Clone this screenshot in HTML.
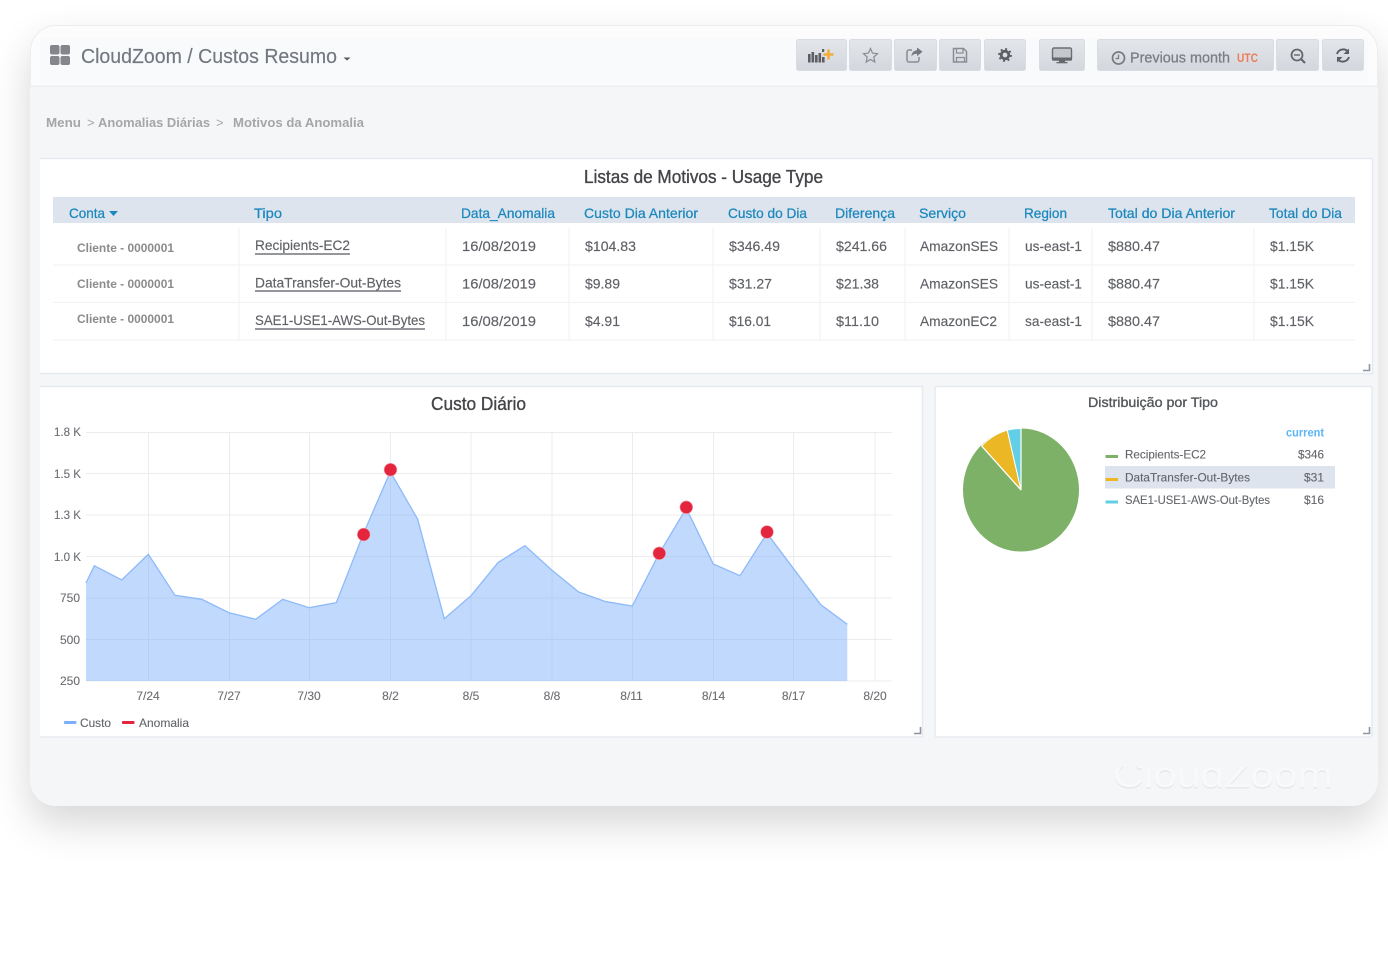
<!DOCTYPE html>
<html lang="pt"><head><meta charset="utf-8"><title>CloudZoom / Custos Resumo</title>
<style>
html,body{margin:0;padding:0;background:#fff;width:1388px;height:959px;overflow:hidden}
#card{position:absolute;left:30px;top:25px;width:1348px;height:781px;border-radius:26px;background:#f5f6f8;box-shadow:0 18px 40px rgba(0,0,0,.16)}
svg{position:absolute;left:0;top:0;filter:blur(.35px)}
text{font-family:"Liberation Sans",sans-serif}
.h text{font-size:14px;fill:#1b88bd;stroke:#1b88bd;stroke-width:.25px}
.c text{font-size:14px;fill:#5f6166;stroke:#5f6166;stroke-width:.15px}
.cl text{font-size:12px;fill:#8b8b8b;font-weight:bold}
.y text,.x text{font-size:12px;fill:#6c6e72;stroke:#6c6e72;stroke-width:.12px}
.lg text{font-size:12px;fill:#63656a;stroke:#63656a;stroke-width:.12px}
.b rect{fill:url(#btn);stroke:#d9dce1}
.bc text{font-size:13px;font-weight:bold;fill:#a6a6a8}
</style></head><body>
<div id="card"></div>
<svg width="1388" height="959" viewBox="0 0 1388 959" xmlns="http://www.w3.org/2000/svg">
<defs>
<linearGradient id="btn" x1="0" y1="0" x2="0" y2="1"><stop offset="0" stop-color="#e3e6ea"/><stop offset="1" stop-color="#d3d7dd"/></linearGradient>
<clipPath id="wm"><rect x="1100" y="767" width="250" height="30"/></clipPath>
</defs>
<!-- header -->
<path d="M30 86V51a26 26 0 0 1 26-26H1352a26 26 0 0 1 26 26V86Z" fill="#fcfcfd"/>
<path d="M30.500 86V51a25.500 25.500 0 0 1 25.500-25.500H1352a25.500 25.500 0 0 1 25.500 25.500V86" fill="none" stroke="#ededf0" stroke-width="1"/>
<rect x="40" y="38" width="1328" height="45" fill="#f9fafb"/>
<rect x="30" y="85.500" width="1348" height="1.500" fill="#eceef1"/>
<g fill="#85868b"><rect x="50" y="45" width="9.500" height="9.500" rx="2"/><rect x="60.500" y="45" width="9.500" height="9.500" rx="2"/><rect x="50" y="56" width="9.500" height="9" rx="2"/><rect x="60.500" y="56" width="9.500" height="9" rx="2"/></g>
<text x="81" y="63" font-size="20" fill="#73777f" stroke="#73777f" stroke-width=".15" textLength="256" lengthAdjust="spacingAndGlyphs">CloudZoom / Custos Resumo</text>
<path d="M343.500 57.500h7l-3.500 3z" fill="#55585e"/>
<!-- toolbar -->
<g class="b">
<rect x="796.500" y="39.500" width="50" height="31" rx="2"/><rect x="849.500" y="39.500" width="42" height="31" rx="2"/><rect x="894.500" y="39.500" width="42" height="31" rx="2"/><rect x="939.500" y="39.500" width="41" height="31" rx="2"/><rect x="984.500" y="39.500" width="41" height="31" rx="2"/><rect x="1039.500" y="39.500" width="45" height="31" rx="2"/><rect x="1097.500" y="39.500" width="176" height="31" rx="2"/><rect x="1276.500" y="39.500" width="42" height="31" rx="2"/><rect x="1322.500" y="39.500" width="41" height="31" rx="2"/>
</g>
<!-- icons -->
<g fill="#5c5e63"><rect x="808" y="54" width="2.600" height="8.500"/><rect x="811.500" y="52" width="2.600" height="10.500"/><rect x="815" y="55" width="2.600" height="7.500"/><rect x="818.500" y="53" width="2.600" height="9.500"/><rect x="822" y="49" width="2.200" height="3"/><rect x="822" y="57" width="2.600" height="5.500"/></g>
<path d="M823.500 54.500h10M828.500 49.500v10" stroke="#f3ae3a" stroke-width="2.600"/>
<path d="M870.500 48.500l2 4.600 5 .6-3.700 3.300 1 5-4.300-2.500-4.300 2.500 1-5-3.700-3.300 5-.6z" fill="none" stroke="#8a8c91" stroke-width="1.200"/>
<path d="M912 50h-3a2 2 0 0 0-2 2v8a2 2 0 0 0 2 2h8a2 2 0 0 0 2-2v-3" fill="none" stroke="#8a8c91" stroke-width="1.500"/>
<path d="M917 47.500l5.500 4.300-5.500 4.300v-2.300c-3 0-4.500 1-5.500 3 0-3.500 2-6.300 5.500-6.500z" fill="#74777d"/>
<path d="M953.500 48.500h10l3 3v10.500h-13z" fill="none" stroke="#8a8c91" stroke-width="1.500"/><path d="M956.500 49v4h6.500v-4M956.500 62v-4.500h8V62" fill="none" stroke="#8a8c91" stroke-width="1.200"/>
<circle cx="1005" cy="55" r="3.800" fill="none" stroke="#5c5e63" stroke-width="2.800"/><circle cx="1005" cy="55" r="6" fill="none" stroke="#5c5e63" stroke-width="1.800" stroke-dasharray="2 2.700"/>
<rect x="1052.500" y="48" width="19" height="12" rx="1.500" fill="#c4c8cd" stroke="#6b6d72" stroke-width="1.400"/><rect x="1052" y="57.500" width="20" height="3" fill="#66686d"/><rect x="1059" y="60.500" width="6" height="2.500" fill="#66686d"/><rect x="1056.500" y="62" width="11" height="1.300" fill="#66686d"/>
<circle cx="1118.500" cy="58" r="6" fill="none" stroke="#7a7c80" stroke-width="1.700"/><path d="M1118.500 54.500v4h-3" fill="none" stroke="#7a7c80" stroke-width="1.300"/>
<text x="1130" y="62.500" font-size="15" fill="#7b7e84" stroke="#7b7e84" stroke-width=".3" textLength="100" lengthAdjust="spacingAndGlyphs">Previous month</text>
<text x="1237" y="62" font-size="12" font-weight="bold" fill="#ec7b55" textLength="21" lengthAdjust="spacingAndGlyphs">UTC</text>
<circle cx="1297" cy="55" r="5.500" fill="none" stroke="#66686d" stroke-width="1.800"/><path d="M1301 59l4 4" stroke="#66686d" stroke-width="2.200"/><path d="M1294 55h6" stroke="#66686d" stroke-width="1.400"/>
<path d="M1337 54a6.500 6.500 0 0 1 11-2.500M1349 57a6.500 6.500 0 0 1-11 2.500" fill="none" stroke="#5c5e63" stroke-width="1.900"/><path d="M1349 48.500v5.500h-5.500zM1337 62.500v-5.500h5.500z" fill="#5c5e63"/>
<!-- breadcrumb -->
<g class="bc">
<text x="46" y="127" textLength="35" lengthAdjust="spacingAndGlyphs">Menu</text><text x="87" y="127" style="font-weight:normal">&gt;</text>
<text x="98" y="127" textLength="112" lengthAdjust="spacingAndGlyphs">Anomalias Diárias</text><text x="216" y="127" style="font-weight:normal">&gt;</text>
<text x="233" y="127" textLength="131" lengthAdjust="spacingAndGlyphs">Motivos da Anomalia</text>
</g>
<!-- panels -->
<rect x="40" y="158" width="1332" height="215.500" fill="#fff"/>
<path d="M40 158.500H1372.500V373.500H40" fill="none" stroke="#e6eaf0" stroke-width="1.500"/>
<rect x="40" y="386" width="882" height="351" fill="#fff"/>
<path d="M40 386.500H922.500V737H40" fill="none" stroke="#e6eaf0" stroke-width="1.500"/>
<rect x="935" y="386.500" width="437" height="350.500" rx="2" fill="#fff" stroke="#e6eaf0" stroke-width="1.500"/>
<g fill="none" stroke="#8d96a5" stroke-width="1.600"><path d="M1363 370.500h6.500V364"/><path d="M914 733.500h6.500V727"/><path d="M1363 733.500h6.500V727"/></g>
<!-- table -->
<text x="584" y="183" font-size="18" fill="#444549" stroke="#444549" stroke-width=".35" textLength="239" lengthAdjust="spacingAndGlyphs">Listas de Motivos - Usage Type</text>
<rect x="53" y="197" width="1302" height="26" fill="#dde4ee"/>
<g stroke="#f2f3f6" stroke-width="1.300"><path d="M53 265H1355M53 302.500H1355M53 340H1355"/><path d="M239 228V340M446 228V340M569 228V340M713 228V340M820 228V340M905 228V340M1009 228V340M1092 228V340M1254 228V340"/></g>
<g class="h">
<text x="69" y="218" textLength="36" lengthAdjust="spacingAndGlyphs">Conta</text>
<text x="254" y="218" textLength="28" lengthAdjust="spacingAndGlyphs">Tipo</text>
<text x="461" y="218" textLength="94" lengthAdjust="spacingAndGlyphs">Data_Anomalia</text>
<text x="584" y="218" textLength="114" lengthAdjust="spacingAndGlyphs">Custo Dia Anterior</text>
<text x="728" y="218" textLength="79" lengthAdjust="spacingAndGlyphs">Custo do Dia</text>
<text x="835" y="218" textLength="60" lengthAdjust="spacingAndGlyphs">Diferença</text>
<text x="919" y="218" textLength="47" lengthAdjust="spacingAndGlyphs">Serviço</text>
<text x="1024" y="218" textLength="43" lengthAdjust="spacingAndGlyphs">Region</text>
<text x="1108" y="218" textLength="127" lengthAdjust="spacingAndGlyphs">Total do Dia Anterior</text>
<text x="1269" y="218" textLength="73" lengthAdjust="spacingAndGlyphs">Total do Dia</text>
</g>
<path d="M109 211h9l-4.500 5z" fill="#1b88bd"/>
<g class="cl">
<text x="77" y="252" textLength="97" lengthAdjust="spacingAndGlyphs">Cliente - 0000001</text>
<text x="77" y="288" textLength="97" lengthAdjust="spacingAndGlyphs">Cliente - 0000001</text>
<text x="77" y="323" textLength="97" lengthAdjust="spacingAndGlyphs">Cliente - 0000001</text>
</g>
<g class="c">
<text x="255" y="250" textLength="95" lengthAdjust="spacingAndGlyphs">Recipients-EC2</text>
<text x="255" y="287.500" textLength="146" lengthAdjust="spacingAndGlyphs">DataTransfer-Out-Bytes</text>
<text x="255" y="325" textLength="170" lengthAdjust="spacingAndGlyphs">SAE1-USE1-AWS-Out-Bytes</text>
<text x="462" y="251" textLength="74" lengthAdjust="spacingAndGlyphs">16/08/2019</text><text x="585" y="251" textLength="51" lengthAdjust="spacingAndGlyphs">$104.83</text><text x="729" y="251" textLength="51" lengthAdjust="spacingAndGlyphs">$346.49</text><text x="836" y="251" textLength="51" lengthAdjust="spacingAndGlyphs">$241.66</text><text x="920" y="251" textLength="78" lengthAdjust="spacingAndGlyphs">AmazonSES</text><text x="1025" y="251" textLength="57" lengthAdjust="spacingAndGlyphs">us-east-1</text><text x="1108" y="251" textLength="52" lengthAdjust="spacingAndGlyphs">$880.47</text><text x="1270" y="251" textLength="44" lengthAdjust="spacingAndGlyphs">$1.15K</text>
<text x="462" y="288.500" textLength="74" lengthAdjust="spacingAndGlyphs">16/08/2019</text><text x="585" y="288.500" textLength="35" lengthAdjust="spacingAndGlyphs">$9.89</text><text x="729" y="288.500" textLength="43" lengthAdjust="spacingAndGlyphs">$31.27</text><text x="836" y="288.500" textLength="43" lengthAdjust="spacingAndGlyphs">$21.38</text><text x="920" y="288.500" textLength="78" lengthAdjust="spacingAndGlyphs">AmazonSES</text><text x="1025" y="288.500" textLength="57" lengthAdjust="spacingAndGlyphs">us-east-1</text><text x="1108" y="288.500" textLength="52" lengthAdjust="spacingAndGlyphs">$880.47</text><text x="1270" y="288.500" textLength="44" lengthAdjust="spacingAndGlyphs">$1.15K</text>
<text x="462" y="326" textLength="74" lengthAdjust="spacingAndGlyphs">16/08/2019</text><text x="585" y="326" textLength="35" lengthAdjust="spacingAndGlyphs">$4.91</text><text x="729" y="326" textLength="42" lengthAdjust="spacingAndGlyphs">$16.01</text><text x="836" y="326" textLength="43" lengthAdjust="spacingAndGlyphs">$11.10</text><text x="920" y="326" textLength="77" lengthAdjust="spacingAndGlyphs">AmazonEC2</text><text x="1025" y="326" textLength="57" lengthAdjust="spacingAndGlyphs">sa-east-1</text><text x="1108" y="326" textLength="52" lengthAdjust="spacingAndGlyphs">$880.47</text><text x="1270" y="326" textLength="44" lengthAdjust="spacingAndGlyphs">$1.15K</text>
</g>
<g stroke="#74757d" stroke-width="1.400"><path d="M255 254H350M255 291H401M255 329H425"/></g>
<!-- chart -->
<text x="431" y="410" font-size="18" fill="#444549" stroke="#444549" stroke-width=".35" textLength="95" lengthAdjust="spacingAndGlyphs">Custo Diário</text>
<g stroke="#ececef" stroke-width="1"><path d="M86 432.500H892M86 473.500H892M86 515H892M86 556.500H892M86 598H892M86 639.500H892M86 681H892"/><path d="M148.500 432V681M229.500 432V681M309.500 432V681M390.500 432V681M471 432V681M552 432V681M632.500 432V681M713.500 432V681M793.500 432V681M875 432V681"/></g>
<path d="M86 681V583L94.300 565.700 121.700 580 148.300 554.300 175 595.300 201.700 599.300 229 612.700 255.700 619.300 282.700 599.300 309.300 607.700 336.300 602.700 363.300 534 390.300 471.700 417.700 519.300 444.300 618.700 471 595.700 498.300 562.300 525 545.700 551.700 570 578.700 592 606 601.700 632.300 606 659.300 553.300 686.300 508.300 713.300 564 740 575.700 767 533.300 794 569.300 820.700 604.700 847.300 624.300V681Z" fill="#7eb0f9" fill-opacity=".48"/>
<path d="M86 583L94.300 565.700 121.700 580 148.300 554.300 175 595.300 201.700 599.300 229 612.700 255.700 619.300 282.700 599.300 309.300 607.700 336.300 602.700 363.300 534 390.300 471.700 417.700 519.300 444.300 618.700 471 595.700 498.300 562.300 525 545.700 551.700 570 578.700 592 606 601.700 632.300 606 659.300 553.300 686.300 508.300 713.300 564 740 575.700 767 533.300 794 569.300 820.700 604.700 847.300 624.300" fill="none" stroke="#8dbafa" stroke-width="1.300"/>
<g fill="#e3253e" stroke="#f4a9b4" stroke-width=".6"><circle cx="363.700" cy="534.500" r="6.400"/><circle cx="390.500" cy="469.700" r="6.400"/><circle cx="659.300" cy="553.300" r="6.400"/><circle cx="686.300" cy="507.300" r="6.400"/><circle cx="767" cy="532" r="6.400"/></g>
<g class="y">
<text x="54" y="436" textLength="27" lengthAdjust="spacingAndGlyphs">1.8 K</text>
<text x="54" y="478" textLength="27" lengthAdjust="spacingAndGlyphs">1.5 K</text>
<text x="54" y="519" textLength="27" lengthAdjust="spacingAndGlyphs">1.3 K</text>
<text x="54" y="561" textLength="27" lengthAdjust="spacingAndGlyphs">1.0 K</text>
<text x="60" y="602" textLength="20" lengthAdjust="spacingAndGlyphs">750</text>
<text x="60" y="644" textLength="20" lengthAdjust="spacingAndGlyphs">500</text>
<text x="60" y="685" textLength="20" lengthAdjust="spacingAndGlyphs">250</text>
</g>
<g class="x" text-anchor="middle">
<text x="148" y="700">7/24</text><text x="229" y="700">7/27</text><text x="309" y="700">7/30</text><text x="390.500" y="700">8/2</text><text x="471" y="700">8/5</text><text x="552" y="700">8/8</text><text x="631.500" y="700">8/11</text><text x="713.500" y="700">8/14</text><text x="793.500" y="700">8/17</text><text x="875" y="700">8/20</text>
</g>
<rect x="64" y="721" width="12.500" height="3" rx="1" fill="#7eb0f9"/><rect x="122" y="721" width="12.500" height="3" rx="1" fill="#e3253e"/>
<g class="lg"><text x="80" y="727" textLength="31" lengthAdjust="spacingAndGlyphs">Custo</text><text x="139" y="727" textLength="50" lengthAdjust="spacingAndGlyphs">Anomalia</text></g>
<!-- pie -->
<text x="1088" y="407" font-size="14" fill="#55575c" stroke="#55575c" stroke-width=".35" textLength="130" lengthAdjust="spacingAndGlyphs">Distribuição por Tipo</text>
<ellipse cx="1021" cy="490" rx="58" ry="61.500" fill="#7eb168"/>
<path d="M1021 490L981.700 446A58 61.500 0 0 1 1007.300 430.200Z" fill="#ebb725" stroke="#fff" stroke-width="1"/>
<path d="M1021 490L1007.300 430.200A58 61.500 0 0 1 1021 428.500Z" fill="#62cfe6" stroke="#fff" stroke-width="1"/>
<path d="M1021 490L981.700 446M1021 490V428.500" stroke="#fff" stroke-width="1.200"/>
<text x="1286" y="436.500" font-size="12" font-weight="bold" fill="#5cb6f6" textLength="38" lengthAdjust="spacingAndGlyphs">current</text>
<rect x="1105" y="466" width="230" height="22.500" fill="#dde4ee"/>
<rect x="1105.500" y="455" width="12.500" height="3" fill="#7eb168"/><rect x="1105.500" y="478" width="12.500" height="3" fill="#ebb725"/><rect x="1105.500" y="500.500" width="12.500" height="3" fill="#62cfe6"/>
<g class="lg">
<text x="1125" y="458.500" textLength="81" lengthAdjust="spacingAndGlyphs">Recipients-EC2</text><text x="1298" y="458.500" textLength="26" lengthAdjust="spacingAndGlyphs">$346</text>
<text x="1125" y="481.500" textLength="125" lengthAdjust="spacingAndGlyphs">DataTransfer-Out-Bytes</text><text x="1304" y="481.500" textLength="20" lengthAdjust="spacingAndGlyphs">$31</text>
<text x="1125" y="504" textLength="145" lengthAdjust="spacingAndGlyphs">SAE1-USE1-AWS-Out-Bytes</text><text x="1304" y="504" textLength="20" lengthAdjust="spacingAndGlyphs">$16</text>
</g>
<!-- watermark -->
<g clip-path="url(#wm)">
<text x="1113" y="788.500" font-size="36" fill="#e6e7ea" textLength="220" lengthAdjust="spacingAndGlyphs">CloudZoom</text>
<text x="1113" y="787" font-size="36" fill="#f8f9fa" textLength="220" lengthAdjust="spacingAndGlyphs">CloudZoom</text>
</g>
</svg>
</body></html>
